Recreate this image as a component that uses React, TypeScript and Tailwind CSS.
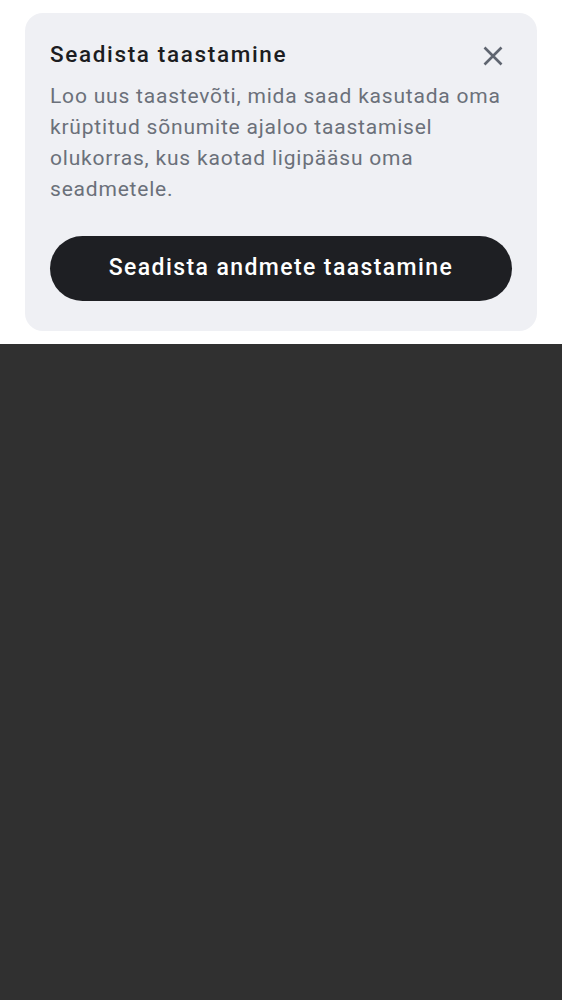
import React from "react";

export default function App() {
  return (
    <div className="flex flex-col w-full h-[1000px] bg-white" style={{ fontFamily: "Roboto, 'Noto Sans', sans-serif" }}>
      <div className="h-[344px] shrink-0 px-[25px] pt-[13px]">
        <div className="relative bg-[#eff0f4] rounded-[18px] px-[25px] pt-[26px] pb-[30px]">
          <h1 className="text-[22.5px] leading-[30px] font-medium text-[#1c1d21] tracking-[1.65px]">Seadista taastamine</h1>
          <button className="absolute right-[34px] top-[33px] flex text-[#5f6570]">
            <svg className="block" width="20" height="20" viewBox="0 0 20 20" fill="none" stroke="currentColor" strokeWidth="2.6">
              <path d="M1.5 1.5 L18.5 18.5 M18.5 1.5 L1.5 18.5" />
            </svg>
          </button>
          <p className="mt-[12px] text-[21px] leading-[31px] text-[#6b707a] tracking-[0.8px]">
            Loo uus taastevõti, mida saad kasutada oma krüptitud sõnumite ajaloo taastamisel olukorras, kus kaotad ligipääsu oma seadmetele.
          </p>
          <button className="mt-[31px] w-full h-[65px] rounded-full bg-[#1e1f23] text-white text-[23px] font-medium tracking-[1.4px]">
            Seadista andmete taastamine
          </button>
        </div>
      </div>
      <div className="flex-1 bg-[#303030]" />
    </div>
  );
}
